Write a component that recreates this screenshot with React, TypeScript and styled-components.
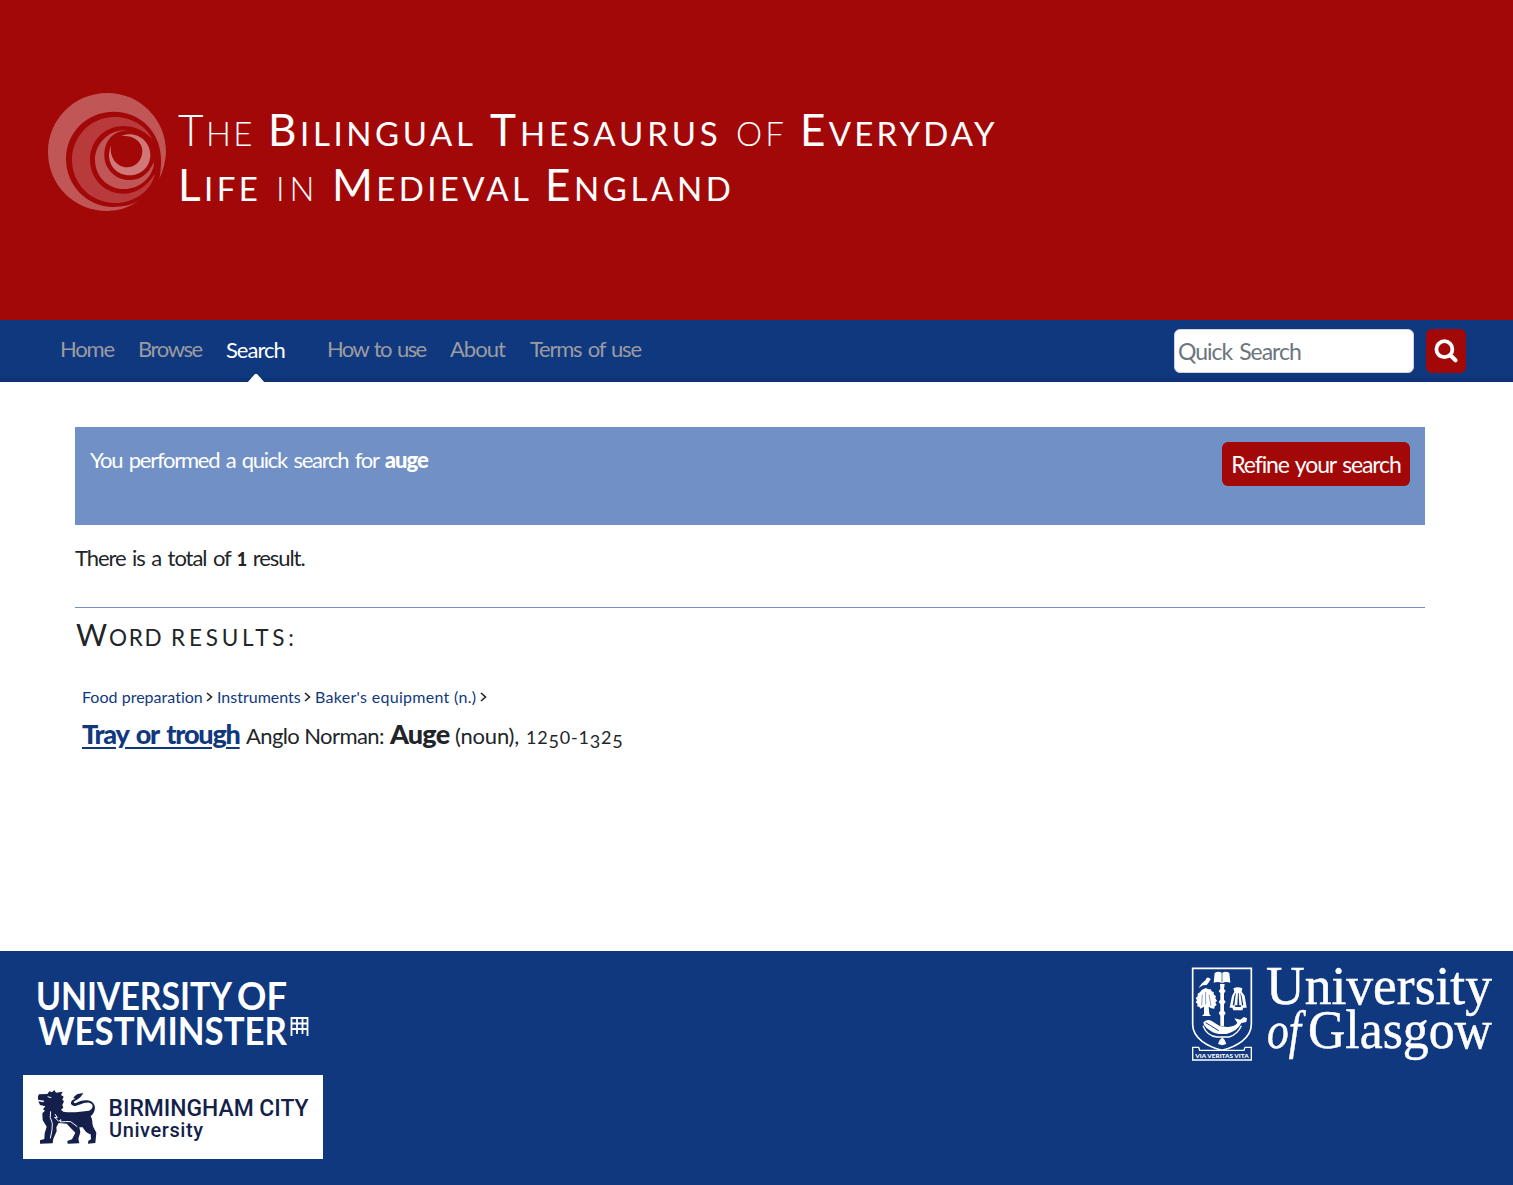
import React from 'react';
import styled, { createGlobalStyle } from 'styled-components';

const Global = createGlobalStyle`
  *, *::before, *::after { box-sizing: border-box; }
  body { margin: 0; background: #fff; color: #212529; font-family: Lato, "Open Sans", sans-serif; font-size: 22px; line-height: 33px; }
  h1, h2, p { margin: 0; font-weight: 400; }
  a { color: #10387f; text-decoration: none; }
`;

const Header = styled.header`
  height: 320px; background: #a30808; color: #fff;
  display: flex; align-items: flex-start; padding: 93px 48px 0; gap: 11px;
`;
const Title = styled.h1`padding-top: 9px; line-height: 55px;`;
const TitleLine = styled.span`display: flex; align-items: baseline; height: 55px; white-space: nowrap;`;
const CapWord = styled.span<{ $w: number; $ls: number; $thin?: boolean; $flat?: boolean; $size?: number; $cap?: number }>`
  display: block; width: ${p => p.$w}px; letter-spacing: ${p => p.$ls}px; text-transform: uppercase;
  font-size: ${p => p.$size ?? 33}px; font-weight: ${p => (p.$thin ? 300 : 400)};
  &::first-letter { font-size: ${p => (p.$flat ? p.$size ?? 33 : p.$cap ?? 44)}px; }
`;

const Nav = styled.nav`
  height: 62px; background: #10387f; border-bottom: 4px solid #0e3274;
  display: flex; justify-content: space-between; padding: 0 47px 0 60px;
`;
const NavList = styled.div`display: flex; padding-top: 12px;`;
const NavItem = styled.a<{ $w: number; $ls: number; $active?: boolean }>`
  width: ${p => p.$w}px; height: 50px; white-space: nowrap; letter-spacing: ${p => p.$ls}px; word-spacing: 2px;
  color: ${p => (p.$active ? '#fff' : '#9b9c9f')}; padding-top: ${p => (p.$active ? 1 : 0)}px;
  display: flex; flex-direction: column;
`;
const Caret = styled.span`
  width: 18px; height: 9px; margin: 8px 0 0 21px; background: #fff; flex: none;
  clip-path: polygon(44% 0, 56% 0, 100% 100%, 0 100%);
`;
const SearchForm = styled.div`display: flex; gap: 12px; padding-top: 9px;`;
const SearchInput = styled.input`
  width: 240px; height: 44px; padding: 0 3px; border: 1px solid #ced4da; border-radius: 6px; background: #fff;
  font-family: inherit; font-size: 23px; letter-spacing: -1px; word-spacing: 2px;
  &::placeholder { color: #6c757d; opacity: 1; }
`;
const Button = styled.button<{ $w: number }>`
  width: ${p => p.$w}px; height: 44px; padding: 0; border: 0; border-radius: 6px; background: #a30808; color: #fff;
  font-family: inherit; font-size: 23px; letter-spacing: -1.15px; word-spacing: 2px; white-space: nowrap;
  display: flex; align-items: center; justify-content: center;
`;

const Main = styled.main`height: 569px; padding: 45px 88px 0 75px;`;
const Summary = styled.section`
  height: 98px; background: #7190c6; color: #fff; padding: 15px;
  display: flex; justify-content: space-between;
`;
const Text = styled.p<{ $ls: number; $top?: number }>`
  white-space: nowrap; letter-spacing: ${p => p.$ls}px; word-spacing: 2px; padding-top: ${p => p.$top ?? 0}px;
`;
const Black = styled.b<{ $ls?: number; $size?: number }>`
  font-weight: 900; letter-spacing: ${p => p.$ls ?? -1}px; font-size: ${p => p.$size ?? 22}px;
`;
const Rule = styled.hr`margin: 31px 0 0; border: 0; height: 1px; background: #7190c6;`;
const Heading = styled.h2`display: flex; align-items: baseline; height: 45px; padding: 7px 0 0 1px; line-height: 38px; white-space: nowrap;`;
const Crumbs = styled.div`
  display: flex; align-items: center; padding: 31px 0 0 7px; font-size: 16px; line-height: 26px; gap: 4px; white-space: nowrap;
`;
const Crumb = styled.a<{ $w: number; $ls: number }>`width: ${p => p.$w}px; letter-spacing: ${p => p.$ls}px;`;
const Result = styled.div`display: flex; align-items: baseline; padding: 5px 0 0 7px; line-height: 38px; white-space: nowrap;`;
const Word = styled.a`
  width: 164px; font-size: 27px; font-weight: 900; letter-spacing: -1.2px; word-spacing: 2.5px;
  span { text-decoration: underline; text-decoration-thickness: 2px; text-underline-offset: 3px; }
`;
const Part = styled.span<{ $w: number; $ls: number; $size?: number; $weight?: number }>`
  width: ${p => p.$w}px; letter-spacing: ${p => p.$ls}px; font-size: ${p => p.$size ?? 22}px; font-weight: ${p => p.$weight ?? 400};
`;
const Low = styled.span`position: relative; top: 4px;`;

const Footer = styled.footer`
  height: 234px; background: #10387f; display: flex; justify-content: space-between; padding: 15px 20px 0 23px;
`;
const LogoColumn = styled.div`display: flex; flex-direction: column;`;
const BcuPanel = styled.div`width: 300px; height: 84px; background: #fff; margin-top: 15px;`;
const Svg = styled.svg`display: block; flex: none; overflow: visible;`;

const SiteMark = () => (
  <Svg width="119" height="118" viewBox="24 24 357 354">
    <path fill="#c15656" d="M202 24C300 24 378 103 378 200Q377 240 358 281Q367 235 361 200C351 130 292 80 222 80C140 80 78 143 78 222C78 300 140 366 220 366Q263 366 295 349Q252 378 202 378C103 378 24 300 24 201C24 103 103 24 202 24Z" />
    <path fill="#b83a3a" d="M222 96C280 96 320 128 337 162Q301 123 250 123C193 123 150 168 150 224C150 280 194 326 250 326Q305 326 345 266C335 315 285 354 225 354C153 354 96 296 96 225C96 154 153 96 222 96Z" />
    <path fill="#c15656" d="M260 136C212 141 193 173 193 212C193 252 228 285 268 285Q318 285 342 230C341 275 300 312 251 312C203 312 165 273 165 224C165 178 206 132 260 136Z" />
    <path fill="#d07777" d="M242 154C285 134 331 165 331 210C331 244 304 271 268 271C232 271 206 244 207 208Q208 192 213 181C207 216 230 247 261 247C288 247 307 225 307 198C307 168 276 148 242 154Z" />
  </Svg>
);

const SearchIcon = () => (
  <Svg width="24" height="24" viewBox="0 0 24 24" fill="none" stroke="#fff">
    <circle cx="10.4" cy="10.2" r="8" strokeWidth="3.8" />
    <path d="M16.4 16.2 21.5 21.2" strokeWidth="4.2" strokeLinecap="round" />
  </Svg>
);

const Chevron = () => (
  <Svg width="7" height="10" viewBox="0 0 7 10" fill="none" stroke="#212529" strokeWidth="1.6">
    <path d="M1 1 5.5 5 1 9" />
  </Svg>
);

const Westminster = () => (
  <Svg width="300" height="94" viewBox="23 966 300 94" fill="#fff" fontFamily="Lato, sans-serif" fontWeight="700" fontSize="38.5">
    <text x="36" y="1009.5" textLength="196" lengthAdjust="spacingAndGlyphs">UNIVERSITY</text>
    <text x="237" y="1009.5" textLength="50" lengthAdjust="spacingAndGlyphs">OF</text>
    <text x="38" y="1045" textLength="249" lengthAdjust="spacingAndGlyphs">WESTMINSTER</text>
    <path d="M291.5 1036V1018H307.5V1036M297 1018V1034M302.5 1018V1034M291 1023.5H308M291 1029H308" fill="none" stroke="#fff" strokeWidth="1.8" />
  </Svg>
);

const Birmingham = () => (
  <Svg width="300" height="84" viewBox="23 1075 300 84" fill="#141f4b" fontFamily="Roboto, sans-serif">
    <text x="108.5" y="1116" fontSize="24" fontWeight="500" textLength="200" lengthAdjust="spacingAndGlyphs">BIRMINGHAM CITY</text>
    <text x="109" y="1137" fontSize="20" fontWeight="500" textLength="94" lengthAdjust="spacing">University</text>
    <g transform="translate(20 1070) scale(.33333)">
      <path d="M54 79 57 73 82 72 88 64 96 67 103 60 108 68 128 65 123 75 131 80 127 89 132 94 127 105 130 113 123 119 130 125C155 129 183 125 207 122C222 115 221 101 207 98C187 96 169 114 157 106C148 99 155 88 167 86L160 85C166 72 179 70 190 70L181 82 170 90C158 95 160 101 168 99C181 92 204 86 217 97C230 108 226 127 212 139C220 150 214 164 222 175L229 188 226 219 204 221 205 212 213 208 212 193C198 189 193 180 188 172L178 172 181 187 175 206 178 220 143 221 142 213 156 208 166 188 155 177 140 161 116 159 109 172 110 184 100 206 98 220 60 221 60 211 73 207 74 190 80 170 68 150 67 130 75 122 69 118 76 109 60 105 55 94 70 97 73 92 54 89Z" />
      <path d="M92 124Q87 142 97 160Q98 178 91 205M105 132 112 143 104 142 116 154 123 149 121 156Q137 154 152 155L172 170" fill="none" stroke="#fff" strokeWidth="3" />
      <path d="M83 80 94 83" stroke="#fff" strokeWidth="3" />
    </g>
  </Svg>
);

const Glasgow = () => (
  <Svg width="302" height="96" viewBox="1191 965 302 96" fill="#fff" fontFamily="'Liberation Serif', serif">
    <g transform="translate(1185 955) scale(.33333)">
      <path d="M23 37H199V205C199 248 153 272 111 283C69 272 23 248 23 205Z" fill="none" stroke="#fff" strokeWidth="5" />
      <path d="M89 51Q101 44 111 51Q122 44 133 51L136 80Q122 75 111 82Q100 75 86 80Z" />
      <path d="M111 50V80" stroke="#10387f" strokeWidth="2" />
      <path d="M105 84H119L117 99 122 105 117 112V131L122 137 117 145V164L122 171 117 179V211H106V179L101 171 106 164V145L101 137 106 131V112L101 105 106 99Z" />
      <path d="M40 96 51 82 62 72 65 65 72 65 77 69 72 78 65 87 54 88Z" />
      <path d="M50 102 56 99 62 96 70 100 77 100 80 106 86 109 87 116 93 121 91 127 96 134 91 140 95 147 89 151 88 158 79 157 71 152 73 174 78 180H51L57 174V152L46 158 43 152 36 151 38 144 32 139 36 133 32 126 38 121 38 113 45 109Z" />
      <path d="M62 108V145M72 116 78 149M52 116 50 148" stroke="#10387f" strokeWidth="1.5" />
      <path d="M145 97Q158 91 172 97L170 107 179 119 185 155H175L172 163H145L142 155H134L141 119 148 107Z" />
      <path d="M152 111 148 120 143 148H149L151 153H167L169 148H175L170 120 166 111Z" fill="#10387f" />
      <path d="M153 109H159L157 148H148ZM161 111H166L171 148H163Z" />
      <path d="M55 199Q68 187 80 195L105 211 128 213Q151 211 157 200L148 187 166 191 177 183 186 187 184 198 169 201Q158 224 127 233Q95 238 76 224Q63 216 57 207Z" />
      <path d="M54 209Q66 240 96 243H132Q158 235 169 209" fill="none" stroke="#fff" strokeWidth="4" />
      <path d="M62 200 77 209 101 224" fill="none" stroke="#10387f" strokeWidth="3" />
      <path d="M104 252 112 244 119 252 124 264 112 268 99 264Z" />
      <path d="M23 274H41L44 283H177L180 274H199V312H23Z" fill="#10387f" stroke="#fff" strokeWidth="4" />
      <text x="31" y="305" fontFamily="Lato, sans-serif" fontSize="19" fontWeight="900" textLength="160" lengthAdjust="spacingAndGlyphs">VIA VERITAS VITA</text>
    </g>
    <g stroke="#fff" strokeWidth=".5">
      <text x="1266" y="1003" fontSize="55" textLength="226" lengthAdjust="spacingAndGlyphs">University</text>
      <text x="1267" y="1047" fontSize="53" fontStyle="italic" textLength="34" lengthAdjust="spacingAndGlyphs">of</text>
      <text x="1308" y="1047" fontSize="55" textLength="184" lengthAdjust="spacingAndGlyphs">Glasgow</text>
    </g>
  </Svg>
);

export default function App() {
  return (
    <>
      <Global />
      <Header>
        <SiteMark />
        <Title>
          <TitleLine>
            <CapWord $w={90} $ls={2.4} $thin>The</CapWord>{' '}
            <CapWord $w={222} $ls={3.6}>Bilingual</CapWord>{' '}
            <CapWord $w={246} $ls={3.9}>Thesaurus</CapWord>{' '}
            <CapWord $w={64} $ls={3} $thin $flat>of</CapWord>{' '}
            <CapWord $w={200} $ls={3.2}>Everyday</CapWord>
          </TitleLine>
          <TitleLine>
            <CapWord $w={98} $ls={3.4}>Life</CapWord>{' '}
            <CapWord $w={56} $ls={5} $thin $flat>in</CapWord>{' '}
            <CapWord $w={213} $ls={3.4}>Medieval</CapWord>{' '}
            <CapWord $w={200} $ls={3.6}>England</CapWord>
          </TitleLine>
        </Title>
      </Header>
      <Nav>
        <NavList>
          <NavItem $w={78} $ls={-1.2}>Home</NavItem>
          <NavItem $w={88} $ls={-1.4}>Browse</NavItem>
          <NavItem $w={101} $ls={-1} $active>Search<Caret /></NavItem>
          <NavItem $w={123} $ls={-1.6}>How to use</NavItem>
          <NavItem $w={80} $ls={-1}>About</NavItem>
          <NavItem $w={112} $ls={-1.25}>Terms of use</NavItem>
        </NavList>
        <SearchForm>
          <SearchInput placeholder="Quick Search" />
          <Button $w={40} aria-label="Search"><SearchIcon /></Button>
        </SearchForm>
      </Nav>
      <Main>
        <Summary>
          <Text $ls={-1.25} $top={1}>You performed a quick search for <Black>auge</Black></Text>
          <Button $w={188}>Refine your search</Button>
        </Summary>
        <Text $ls={-1.08} $top={16}>There is a total of <Black $size={18}>1</Black> result.</Text>
        <Rule />
        <Heading>
          <CapWord $w={95} $ls={1.8} $size={22.5} $cap={30}>Word</CapWord>{' '}
          <CapWord $w={130} $ls={3.8} $size={22.5} $flat>results:</CapWord>
        </Heading>
        <Crumbs>
          <Crumb $w={120} $ls={0.02}>Food preparation</Crumb><Chevron />
          <Crumb $w={83} $ls={0}>Instruments</Crumb><Chevron />
          <Crumb $w={161} $ls={0.3}>Baker's equipment (n.)</Crumb><Chevron />
        </Crumbs>
        <Result>
          <Word><span>Tray or trough</span></Word>
          <Part $w={144} $ls={-0.6}>Anglo Norman:</Part>
          <Part $w={65} $ls={-0.8} $size={27} $weight={900}>Auge</Part>
          <Part $w={71} $ls={-0.2}>(noun),</Part>
          <Part $w={97} $ls={0.8} $size={18}>12<Low>5</Low>0-1<Low>3</Low>2<Low>5</Low></Part>
        </Result>
      </Main>
      <Footer>
        <LogoColumn>
          <Westminster />
          <BcuPanel><Birmingham /></BcuPanel>
        </LogoColumn>
        <Glasgow />
      </Footer>
    </>
  );
}
